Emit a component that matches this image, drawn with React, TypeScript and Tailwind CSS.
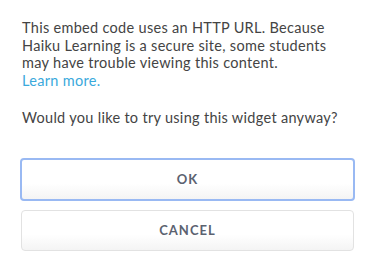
export default function App() {
  return (
    <div className="h-[272px] w-[375px] bg-white pl-[22px] pr-[18px] pt-[19px] font-['Lato','Liberation_Sans',sans-serif] text-[#444444]">
      <p className="w-[314px] text-[14.5px] leading-[17.6px] tracking-[0.3px]">
        This embed code uses an HTTP URL. Because Haiku Learning is a secure site, some students may have trouble viewing
        this content.
        <br />
        <a className="text-[#3aa9dc]">Learn more.</a>
      </p>
      <p className="mt-[20px] whitespace-nowrap text-[14.5px] leading-[17.6px] tracking-[0.3px]">
        Would you like to try using this widget anyway?
      </p>
      <div className="mr-[4px] mt-[31px] flex flex-col gap-[9px]">
        <button className="-mx-[2px] h-[43px] rounded-[4px] border-2 border-[#99b9f3] bg-gradient-to-b from-white from-60% to-[#f4f4f4] text-[13px] font-bold tracking-[0.08em] text-[#5b6270]">
          OK
        </button>
        <button className="-mx-[1px] h-[41px] rounded-[4px] border border-[#e2e2e2] bg-gradient-to-b from-white from-60% to-[#f4f4f4] text-[13px] font-bold tracking-[0.08em] text-[#5b6270]">
          CANCEL
        </button>
      </div>
    </div>
  );
}
